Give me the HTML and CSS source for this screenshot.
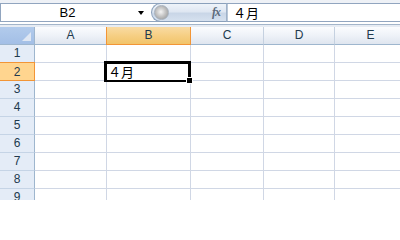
FILE: index.html
```
<!DOCTYPE html>
<html>
<head>
<meta charset="utf-8">
<link rel="stylesheet" href="styles.css">
</head>
<body>
<div class="app">
  <div class="topstrip"></div>
  <div class="fbar">
    <div class="namebox"><span class="nameval">B2</span><span class="drop"></span></div>
    <div class="fbtn"><span class="orb"></span><span class="fx">fx</span></div>
    <div class="finput">４月</div>
  </div>
  <div class="fstrip"></div>
  <div class="gap"></div>
  <div class="grid">
    <div class="corner"><span class="tri"></span></div>
    <div class="ch">A</div><div class="ch sel">B</div><div class="ch">C</div><div class="ch">D</div><div class="ch">E</div>

    <div class="rh">1</div><div class="c"></div><div class="c"></div><div class="c"></div><div class="c"></div><div class="c"></div>
    <div class="rh sel">2</div><div class="c"></div><div class="c active"><span class="val">４月</span><span class="selbox"><span class="handle"></span></span></div><div class="c"></div><div class="c"></div><div class="c"></div>
    <div class="rh">3</div><div class="c"></div><div class="c"></div><div class="c"></div><div class="c"></div><div class="c"></div>
    <div class="rh">4</div><div class="c"></div><div class="c"></div><div class="c"></div><div class="c"></div><div class="c"></div>
    <div class="rh">5</div><div class="c"></div><div class="c"></div><div class="c"></div><div class="c"></div><div class="c"></div>
    <div class="rh">6</div><div class="c"></div><div class="c"></div><div class="c"></div><div class="c"></div><div class="c"></div>
    <div class="rh">7</div><div class="c"></div><div class="c"></div><div class="c"></div><div class="c"></div><div class="c"></div>
    <div class="rh">8</div><div class="c"></div><div class="c"></div><div class="c"></div><div class="c"></div><div class="c"></div>
    <div class="rh">9</div><div class="c"></div><div class="c"></div><div class="c"></div><div class="c"></div><div class="c"></div>
  </div>
</div>
</body>
</html>
```
FILE: styles.css
```
html, body {
  margin: 0;
  padding: 0;
  background: #ffffff;
}
.app {
  width: 400px;
  height: 200px;
  overflow: hidden;
  font-family: "Liberation Sans", Arial, sans-serif;
}
.topstrip {
  height: 3px;
  background: #eef1f6;
}
.fbar {
  display: flex;
  height: 17px;
  border-top: 1px solid #91a5bf;
  border-bottom: 1px solid #91a5bf;
  background: #ffffff;
}
.namebox {
  width: 150px;
  border-left: 1px solid #91a5bf;
  box-sizing: border-box;
  display: flex;
  align-items: center;
  position: relative;
}
.nameval {
  flex: 1;
  text-align: center;
  font-size: 13px;
  color: #000;
  padding-right: 6px;
  padding-left: 2px;
}
.drop {
  width: 0;
  height: 0;
  border-left: 3px solid transparent;
  border-right: 3px solid transparent;
  border-top: 4px solid #000;
  margin-right: 6px;
}
.fbtn {
  width: 76px;
  margin-left: 1px;
  margin-top: -1px;
  margin-bottom: -1px;
  box-sizing: border-box;
  border: 1px solid #8aa0bb;
  border-right: 1px solid #9fb2c9;
  border-radius: 10px 0 0 10px;
  background: linear-gradient(#eef3f9, #dfe7f2 45%, #c9d6e7 55%, #d6e1ef);
  display: flex;
  align-items: center;
  justify-content: space-between;
}
.orb {
  width: 13px;
  height: 13px;
  border-radius: 50%;
  margin-left: 2px;
  background: radial-gradient(circle at 45% 45%, #f4f4f4 0, #c4c4c4 45%, #8e8e8e 100%);
  border: 1px solid #a7b1bd;
}
.fx {
  font-family: "Liberation Serif", "Times New Roman", serif;
  font-style: italic;
  font-weight: bold;
  font-size: 12px;
  color: #5d6b7c;
  margin-right: 6px;
  letter-spacing: -1px;
}
.finput {
  flex: 1;
  padding-left: 5px;
  font-family: "Noto Sans CJK JP", sans-serif;
  font-size: 13px;
  line-height: 17px;
  color: #000;
  border-left: 1px solid #b9c7d8;
}
.fstrip {
  height: 2px;
  background: #ffffff;
  border-bottom: 1px solid #a3b5ca;
}
.gap {
  height: 2px;
  background: #e7ecf3;
}
.grid {
  display: grid;
  grid-template-columns: 35px 72px 84px 73px 71px 72px;
  grid-auto-rows: 18px;
}
.grid > div {
  box-sizing: border-box;
}
.corner {
  background: linear-gradient(#b2cbec, #a3bfe6);
  border-right: 1px solid #9eb6ce;
  border-bottom: 1px solid #9eb6ce;
  position: relative;
}
.tri {
  position: absolute;
  right: 3px;
  bottom: 3px;
  width: 0;
  height: 0;
  border-left: 9px solid transparent;
  border-bottom: 9px solid #dfe7f3;
}
.ch {
  background: linear-gradient(#fbfcfe, #eef2f8 50%, #dfe5ef);
  border-right: 1px solid #c5d1e0;
  border-bottom: 1px solid #9eb6ce;
  text-align: center;
  font-size: 12px;
  line-height: 17px;
  color: #213a4e;
}
.ch.sel {
  background: linear-gradient(#f9dba4, #f6cf84 50%, #f2c46a);
  border: 1px solid #f29536;
  border-top: 0;
  line-height: 17px;
  margin-left: -1px;
}
.rh {
  background: #e4ecf7;
  border-right: 1px solid #9eb6ce;
  border-bottom: 1px solid #c5d4e6;
  text-align: center;
  font-size: 12px;
  line-height: 17px;
  color: #213a4e;
}
.rh.sel {
  background: #ffd58f;
  border: 1px solid #f29536;
  border-left: 0;
  margin-top: -1px;
  height: 19px;
  line-height: 18px;
}
.c {
  border-right: 1px solid #d0d7e5;
  border-bottom: 1px solid #d0d7e5;
}
.active {
  position: relative;
}
.val {
  font-family: "Noto Sans CJK JP", sans-serif;
  font-size: 13px;
  line-height: 17px;
  padding-left: 1px;
  position: relative;
  z-index: 1;
}
.selbox {
  position: absolute;
  left: -3px;
  top: -2px;
  width: 87px;
  height: 21px;
  box-sizing: border-box;
  border: 3px solid #000;
  border-width: 3px 3px 2px 3px;
}
.handle {
  position: absolute;
  right: -5px;
  bottom: -4px;
  width: 5px;
  height: 5px;
  background: #000;
  border: 1px solid #fff;
}
```
